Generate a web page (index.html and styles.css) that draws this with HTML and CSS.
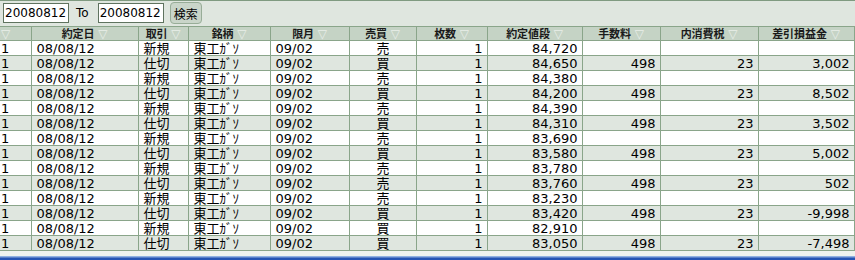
FILE: index.html
```html
<!DOCTYPE html>
<html lang="ja">
<head>
<meta charset="utf-8">
<link rel="stylesheet" href="styles.css">
</head>
<body>
<div class="page">
  <div class="toolbar">
    <input class="date" type="text" value="20080812">
    <span class="to">To</span>
    <input class="date" type="text" value="20080812">
    <button class="search">検索</button>
  </div>
  <table class="grid">
    <colgroup>
      <col style="width:31px"><col style="width:107px"><col style="width:50px"><col style="width:82px">
      <col style="width:79px"><col style="width:67px"><col style="width:71px"><col style="width:95px">
      <col style="width:78px"><col style="width:98px"><col style="width:96px">
    </colgroup>
    <thead>
      <tr>
        <th class="first"><span class="tri">▽</span></th>
        <th>約定日 <span class="tri">▽</span></th>
        <th>取引 <span class="tri">▽</span></th>
        <th>銘柄 <span class="tri">▽</span></th>
        <th>限月 <span class="tri">▽</span></th>
        <th>売買 <span class="tri">▽</span></th>
        <th>枚数 <span class="tri">▽</span></th>
        <th>約定値段 <span class="tri">▽</span></th>
        <th>手数料 <span class="tri">▽</span></th>
        <th>内消費税 <span class="tri">▽</span></th>
        <th>差引損益金 <span class="tri">▽</span></th>
      </tr>
    </thead>
    <tbody>
      <tr><td class="first">1</td><td>08/08/12</td><td>新規</td><td>東工ｶﾞｿ</td><td>09/02</td><td class="c">売</td><td class="r">1</td><td class="r">84,720</td><td class="r"></td><td class="r"></td><td class="r"></td></tr>
      <tr><td class="first">1</td><td>08/08/12</td><td>仕切</td><td>東工ｶﾞｿ</td><td>09/02</td><td class="c">買</td><td class="r">1</td><td class="r">84,650</td><td class="r">498</td><td class="r">23</td><td class="r">3,002</td></tr>
      <tr><td class="first">1</td><td>08/08/12</td><td>新規</td><td>東工ｶﾞｿ</td><td>09/02</td><td class="c">売</td><td class="r">1</td><td class="r">84,380</td><td class="r"></td><td class="r"></td><td class="r"></td></tr>
      <tr><td class="first">1</td><td>08/08/12</td><td>仕切</td><td>東工ｶﾞｿ</td><td>09/02</td><td class="c">買</td><td class="r">1</td><td class="r">84,200</td><td class="r">498</td><td class="r">23</td><td class="r">8,502</td></tr>
      <tr><td class="first">1</td><td>08/08/12</td><td>新規</td><td>東工ｶﾞｿ</td><td>09/02</td><td class="c">売</td><td class="r">1</td><td class="r">84,390</td><td class="r"></td><td class="r"></td><td class="r"></td></tr>
      <tr><td class="first">1</td><td>08/08/12</td><td>仕切</td><td>東工ｶﾞｿ</td><td>09/02</td><td class="c">買</td><td class="r">1</td><td class="r">84,310</td><td class="r">498</td><td class="r">23</td><td class="r">3,502</td></tr>
      <tr><td class="first">1</td><td>08/08/12</td><td>新規</td><td>東工ｶﾞｿ</td><td>09/02</td><td class="c">売</td><td class="r">1</td><td class="r">83,690</td><td class="r"></td><td class="r"></td><td class="r"></td></tr>
      <tr><td class="first">1</td><td>08/08/12</td><td>仕切</td><td>東工ｶﾞｿ</td><td>09/02</td><td class="c">買</td><td class="r">1</td><td class="r">83,580</td><td class="r">498</td><td class="r">23</td><td class="r">5,002</td></tr>
      <tr><td class="first">1</td><td>08/08/12</td><td>新規</td><td>東工ｶﾞｿ</td><td>09/02</td><td class="c">売</td><td class="r">1</td><td class="r">83,780</td><td class="r"></td><td class="r"></td><td class="r"></td></tr>
      <tr><td class="first">1</td><td>08/08/12</td><td>仕切</td><td>東工ｶﾞｿ</td><td>09/02</td><td class="c">売</td><td class="r">1</td><td class="r">83,760</td><td class="r">498</td><td class="r">23</td><td class="r">502</td></tr>
      <tr><td class="first">1</td><td>08/08/12</td><td>新規</td><td>東工ｶﾞｿ</td><td>09/02</td><td class="c">売</td><td class="r">1</td><td class="r">83,230</td><td class="r"></td><td class="r"></td><td class="r"></td></tr>
      <tr><td class="first">1</td><td>08/08/12</td><td>仕切</td><td>東工ｶﾞｿ</td><td>09/02</td><td class="c">買</td><td class="r">1</td><td class="r">83,420</td><td class="r">498</td><td class="r">23</td><td class="r">-9,998</td></tr>
      <tr><td class="first">1</td><td>08/08/12</td><td>新規</td><td>東工ｶﾞｿ</td><td>09/02</td><td class="c">買</td><td class="r">1</td><td class="r">82,910</td><td class="r"></td><td class="r"></td><td class="r"></td></tr>
      <tr><td class="first">1</td><td>08/08/12</td><td>仕切</td><td>東工ｶﾞｿ</td><td>09/02</td><td class="c">買</td><td class="r">1</td><td class="r">83,050</td><td class="r">498</td><td class="r">23</td><td class="r">-7,498</td></tr>
    </tbody>
  </table>
  <div class="filler"></div>
  <div class="frame"></div>
</div>
</body>
</html>
```

FILE: styles.css
```css
* { box-sizing: border-box; }
html, body { margin: 0; padding: 0; }
body {
  width: 855px;
  height: 260px;
  overflow: hidden;
  background: #eef2ee;
  font-family: "DejaVu Sans", "Noto Sans CJK JP", sans-serif;
}
.page {
  display: flex;
  flex-direction: column;
  height: 260px;
}
.toolbar {
  display: flex;
  align-items: center;
  flex: none;
  height: 26px;
  padding: 0 0 1px 3px;
  background: #dfe6df;
  border-top: 1px solid #7f9a80;
}
.date {
  width: 66px;
  height: 20px;
  padding: 0 0 0 1px;
  margin: 0;
  border: 1px solid #5f735f;
  background: #fff;
  font-family: "DejaVu Sans", sans-serif;
  font-size: 12px;
  color: #000;
  outline: none;
}
.to {
  font-family: "DejaVu Sans", sans-serif;
  font-size: 12px;
  margin: 0 9px 0 7px;
  color: #000;
}
.search {
  margin-left: 6px;
  width: 32px;
  height: 22px;
  padding: 0;
  border: 1px solid #98ad98;
  border-radius: 4px;
  background: #c9d5c9;
  font-family: "Noto Sans CJK JP", sans-serif;
  font-size: 12px;
  color: #000;
}
.grid {
  flex: none;
  border-collapse: collapse;
  table-layout: fixed;
  width: 854px;
  font-size: 13px;
}
.grid thead tr { height: 14px; }
.grid th {
  padding: 0 4px;
  background: #c5d3c5;
  border: 1px solid #8aa58a;
  font-family: "Noto Sans CJK JP", sans-serif;
  font-size: 11px;
  font-weight: 700;
  line-height: 12px;
  text-align: center;
  color: #1a1a1a;
  white-space: nowrap;
}
.grid th.first { text-align: left; padding: 0; border-left: none; }
.tri {
  color: #e9efe9;
  font-family: "DejaVu Sans", sans-serif;
  font-weight: 400;
  font-size: 12px;
  line-height: 11px;
  margin-left: 1px;
}
.grid tbody tr { height: 15px; }
.grid td {
  padding: 0 4px 0 5px;
  border: 1px solid #8aa58a;
  line-height: 11px;
  color: #000;
  white-space: nowrap;
  overflow: hidden;
  font-family: "DejaVu Sans", "Noto Sans CJK JP", sans-serif;
}
.grid td.first { padding-left: 1px; border-left: none; }
.grid td.c { text-align: center; }
.grid td.r { text-align: right; }
.grid tbody tr:nth-child(odd) td { background: #fff; }
.grid tbody tr:nth-child(even) td { background: #dfe6df; }
.filler { flex: 1; }
.frame {
  flex: none;
  height: 4px;
  border-top: 1px solid #8fb0e0;
  border-bottom: 2px solid #2454b4;
  background: #5a80c8;
}
```
